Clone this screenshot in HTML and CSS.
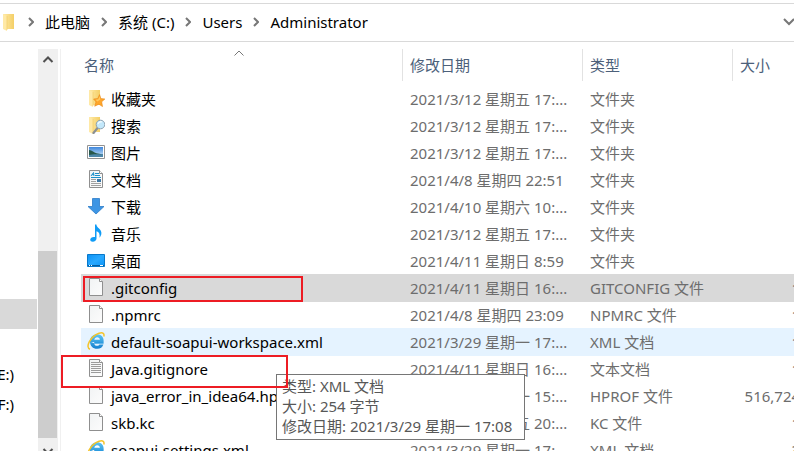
FILE: index.html
```html
<!DOCTYPE html>
<html lang="zh-CN">
<head>
<meta charset="utf-8">
<title>Administrator</title>
<link rel="stylesheet" href="styles.css">
</head>
<body>
<svg class="defs" aria-hidden="true">
  <defs>
    <linearGradient id="gold" x1="0" x2="1"><stop offset="0" stop-color="#ffeaa6"/><stop offset="1" stop-color="#f4cf67"/></linearGradient>
    <linearGradient id="sky" x1="0" y1="0" x2="0" y2="1"><stop offset="0" stop-color="#3e86dc"/><stop offset="1" stop-color="#d5ecfa"/></linearGradient>
    <linearGradient id="paper" x1="0" y1="0" x2="1" y2="1"><stop offset="0" stop-color="#f1f3f4"/><stop offset="1" stop-color="#fcfcfc"/></linearGradient>
    <linearGradient id="screen" x1="0" y1="0" x2="1" y2="1"><stop offset="0" stop-color="#0c92f5"/><stop offset=".5" stop-color="#2aa9ff"/><stop offset="1" stop-color="#0b95f8"/></linearGradient>
    <linearGradient id="ie" x1="0" y1="0" x2="0" y2="1"><stop offset="0" stop-color="#5cc5f3"/><stop offset="1" stop-color="#1580cf"/></linearGradient>
    <symbol id="folder" viewBox="0 0 18 18">
      <path d="M2 1h11v15H6z" fill="url(#gold)"/>
      <path d="M2 1l4 2v15l-4-2z" fill="#ffe9a6"/>
      <path d="M6 3v14" stroke="#f0c95f" stroke-width=".6"/>
    </symbol>
    <symbol id="star" viewBox="0 0 18 18">
      <use href="#folder" width="18" height="18"/>
      <path d="M12.6 5.6l1.3 4 4 .4-3.2 2.8.8 4.8-3.6-2.4-4.2 2 1.3-4.3L6.6 10l4.2-.4z" fill="#ffa62b" stroke="#e98a1a" stroke-width=".6"/>
      <path d="M12.5 7l.8 3.6-3 2-1.6-1.8 2.7-.5z" fill="#ffcb62"/>
    </symbol>
    <symbol id="search" viewBox="0 0 18 18">
      <use href="#folder" width="18" height="18"/>
      <path d="M10.5 12L6.5 17" stroke="#8b9094" stroke-width="2.2" stroke-linecap="round"/>
      <circle cx="13.5" cy="8.5" r="4.3" fill="#c3e8fb" stroke="#8fa2b0"/>
      <path d="M11 8a3 3 0 0 1 4-2" stroke="#f2fbff" stroke-width="1.3" fill="none"/>
    </symbol>
    <symbol id="picture" viewBox="0 0 18 18">
      <path d="M.5 2.5h17v13H.5z" fill="#fff" stroke="#929292"/>
      <path d="M2 4h14v10H2z" fill="url(#sky)"/>
      <path d="M2 7c3 0 5 3 9 3.500l5 1V12H2z" fill="#28584b"/>
      <path d="M2 12c5-1.500 9 0 14-1v3H2z" fill="#4d87a9"/>
    </symbol>
    <symbol id="blank" viewBox="0 0 18 18">
      <path d="M2.500 .5h10l3 3v14h-13z" fill="url(#paper)" stroke="#8f8f8f"/>
      <path d="M12.500 .5v3h3" fill="#fff" stroke="#8f8f8f"/>
    </symbol>
    <symbol id="text" viewBox="0 0 18 18">
      <use href="#blank" width="18" height="18"/>
      <path d="M4 3.500h8M4 5.500h10M4 7.500h10M4 9.500h10M4 11.500h10M4 13.500h10" stroke="#9b9b9b"/>
    </symbol>
    <symbol id="document" viewBox="0 0 18 18">
      <use href="#blank" width="18" height="18"/>
      <path d="M4 6l2.500-3.500L7 6M5 4.700h2M8 3.500h4M8 5.500h5M4 7.500h10" stroke="#1c8fc9" fill="none"/>
      <path d="M4 9.500h5M4 11.500h5M4 13.500h10M4 15.500h10" stroke="#a0a0a0"/>
      <path d="M10 9h4v3h-4z" fill="#3b77a6"/>
    </symbol>
    <symbol id="download" viewBox="0 0 18 18">
      <path d="M5.500 1.500h7v8h4.500L9 17 1 9.500h4.500z" fill="#3d95e4" stroke="#2c7cc9" stroke-width=".8"/>
    </symbol>
    <symbol id="music" viewBox="0 0 18 18">
      <path d="M8 .5h1.400c.3 3.600 5.100 4.500 5 8.500 0 2-.8 3.400-1.900 4.700.6-3.700-.5-5.700-3-6.400v7.200c0 2-1.700 3.200-3.700 3.200-1.600 0-2.600-.8-2.600-2 0-1.900 2.200-3.200 4.800-2.700z" fill="#109cf6"/>
    </symbol>
    <symbol id="desktop" viewBox="0 0 18 18">
      <path d="M.5 3.500h17v12H.5z" fill="url(#screen)" stroke="#0878c9"/>
      <path d="M1 14.500h16" stroke="#075e9f"/>
      <path d="M2 14.500h1M4 14.500h1M13 14.500h3" stroke="#fff"/>
    </symbol>
    <symbol id="explorer" viewBox="0 0 18 18">
      <path d="M4 10h12.600c.5-5-2.400-7.800-6.400-7.800-4.300 0-7.200 3-7.200 7.300 0 4.400 2.900 7.300 7.200 7.300 3.200 0 5.400-1.500 6.200-4.300h-3.900c-.5.900-1.200 1.300-2.300 1.300-1.800 0-2.900-.9-3-2.600zM7.300 7.700c.3-1.600 1.300-2.500 2.900-2.500s2.600.9 2.700 2.500z" fill="url(#ie)" fill-rule="evenodd"/>
      <path d="M7.200 9.900h9.400v1.800H7.200z" fill="#2b9be0"/>
      <path d="M3 17.200C-2 15.500 3 4.500 12 1.300c4-1.400 5.600.4 4.800 3.200" fill="none" stroke="#f4c42c" stroke-width="1.500"/>
    </symbol>
  </defs>
</svg>

<header class="address">
  <nav class="crumbs" aria-label="路径">
    <svg class="icon crumb-folder" aria-hidden="true"><use href="#folder"/></svg>
    <svg class="chevron" viewBox="0 0 6 10"><path d="M1 1l4 4-4 4"/></svg>
    <a href="#">此电脑</a>
    <svg class="chevron" viewBox="0 0 6 10"><path d="M1 1l4 4-4 4"/></svg>
    <a href="#">系统 (C:)</a>
    <svg class="chevron" viewBox="0 0 6 10"><path d="M1 1l4 4-4 4"/></svg>
    <a href="#">Users</a>
    <svg class="chevron" viewBox="0 0 6 10"><path d="M1 1l4 4-4 4"/></svg>
    <a href="#">Administrator</a>
  </nav>
  <button class="history" type="button" aria-label="以前的位置"><svg viewBox="0 0 12 8"><path d="M1 1l5 5 5-5"/></svg></button>
</header>

<main class="explorer">
  <nav class="tree" aria-label="导航窗格">
    <a class="drive current" href="#" aria-label="系统 (C:)"></a>
    <a class="drive" href="#" aria-label="D:"></a>
    <a class="drive" href="#">E:)</a>
    <a class="drive" href="#">F:)</a>
  </nav>
  <div class="scrollbar" aria-hidden="true">
    <svg class="arrow" viewBox="0 0 20 20"><path d="M5.500 13L10 8.500l4.500 4.500"/></svg>
    <div class="thumb"></div>
    <svg class="arrow" viewBox="0 0 20 20"><path d="M5.500 11L10 15.500l4.500-4.500"/></svg>
  </div>
  <section class="files">
    <table>
      <colgroup><col class="col-name"><col class="col-date"><col class="col-type"><col class="col-size"></colgroup>
      <thead>
        <tr>
          <th>名称<svg class="sort" viewBox="0 0 10 6"><path d="M.5 5.500L5 1l4.500 4.500"/></svg></th>
          <th>修改日期</th><th>类型</th><th>大小</th>
        </tr>
      </thead>
      <tbody>
        <tr><td><span class="name"><svg class="icon"><use href="#star"/></svg>收藏夹</span></td><td>2021/3/12 星期五 17:...</td><td>文件夹</td><td></td></tr>
        <tr><td><span class="name"><svg class="icon"><use href="#search"/></svg>搜索</span></td><td>2021/3/12 星期五 17:...</td><td>文件夹</td><td></td></tr>
        <tr><td><span class="name"><svg class="icon"><use href="#picture"/></svg>图片</span></td><td>2021/3/12 星期五 17:...</td><td>文件夹</td><td></td></tr>
        <tr><td><span class="name"><svg class="icon"><use href="#document"/></svg>文档</span></td><td>2021/4/8 星期四 22:51</td><td>文件夹</td><td></td></tr>
        <tr><td><span class="name"><svg class="icon"><use href="#download"/></svg>下载</span></td><td>2021/4/10 星期六 10:...</td><td>文件夹</td><td></td></tr>
        <tr><td><span class="name"><svg class="icon"><use href="#music"/></svg>音乐</span></td><td>2021/3/12 星期五 17:...</td><td>文件夹</td><td></td></tr>
        <tr><td><span class="name"><svg class="icon"><use href="#desktop"/></svg>桌面</span></td><td>2021/4/11 星期日 8:59</td><td>文件夹</td><td></td></tr>
        <tr class="selected"><td><span class="name"><svg class="icon"><use href="#blank"/></svg>.gitconfig</span></td><td>2021/4/11 星期日 16:...</td><td>GITCONFIG 文件</td><td>1 KB</td></tr>
        <tr><td><span class="name"><svg class="icon"><use href="#blank"/></svg>.npmrc</span></td><td>2021/4/8 星期四 23:09</td><td>NPMRC 文件</td><td>1 KB</td></tr>
        <tr class="hovered"><td><span class="name"><svg class="icon"><use href="#explorer"/></svg>default-soapui-workspace.xml</span></td><td>2021/3/29 星期一 17:...</td><td>XML 文档</td><td>1 KB</td></tr>
        <tr><td><span class="name"><svg class="icon"><use href="#text"/></svg>Java.gitignore</span></td><td>2021/4/11 星期日 16:...</td><td>文本文档</td><td>1 KB</td></tr>
        <tr><td><span class="name"><svg class="icon"><use href="#blank"/></svg>java_error_in_idea64.hprof</span></td><td>2021/3/29 星期一 15:...</td><td>HPROF 文件</td><td>516,724 KB</td></tr>
        <tr><td><span class="name"><svg class="icon"><use href="#blank"/></svg>skb.kc</span></td><td>2021/3/12 星期五 20:...</td><td>KC 文件</td><td>1 KB</td></tr>
        <tr><td><span class="name"><svg class="icon"><use href="#explorer"/></svg>soapui-settings.xml</span></td><td>2021/3/29 星期一 17:...</td><td>XML 文档</td><td>3 KB</td></tr>
      </tbody>
    </table>
  </section>
</main>

<div class="tooltip" role="tooltip">
  <div>类型: XML 文档</div>
  <div>大小: 254 字节</div>
  <div>修改日期: 2021/3/29 星期一 17:08</div>
</div>
<div class="mark mark-config"></div>
<div class="mark mark-ignore"></div>
</body>
</html>
```
FILE: styles.css
```css
* { box-sizing: border-box; }

body {
  margin: 0;
  padding-top: 3px;
  height: 100vh;
  overflow: hidden;
  display: flex;
  flex-direction: column;
  position: relative;
  background: #fff;
  color: #000;
  font: 15px/20px "Noto Sans", "Noto Sans CJK SC", sans-serif;
}

a { color: inherit; text-decoration: none; }
.defs { position: absolute; width: 0; height: 0; }
.icon { width: 18px; height: 18px; flex: none; }

.address {
  flex: none;
  height: 39px;
  padding-bottom: 2px;
  display: flex;
  align-items: center;
  justify-content: space-between;
  border-top: 1px solid #d9d9d9;
  border-bottom: 1px solid #d9d9d9;
}
.crumbs { display: flex; align-items: center; gap: 11px; white-space: nowrap; padding-left: 1px; }
.crumb-folder { margin-right: -2px; }
.chevron { width: 6px; height: 10px; fill: none; stroke: #777; stroke-width: 2; }
.history {
  width: 16px;
  height: 24px;
  margin-right: -5px;
  padding: 0;
  border: 0;
  background: none;
}
.history svg { display: block; width: 12px; height: 8px; fill: none; stroke: #777; stroke-width: 2; }

.explorer { flex: 1; min-height: 0; display: flex; }

.tree { flex: none; width: 37px; padding-top: 257px; margin-right: 1px; overflow: hidden; }
.drive {
  display: flex;
  align-items: center;
  justify-content: flex-end;
  height: 30px;
  padding-right: 23px;
}
.drive.current { background: #d9d9d9; }

.scrollbar {
  flex: none;
  width: 20px;
  margin-top: 7px;
  background: #f0f0f0;
  display: flex;
  flex-direction: column;
}
.arrow { width: 20px; height: 20px; flex: none; fill: none; stroke: #505050; stroke-width: 2; }
.thumb { width: 19px; height: 187px; margin-top: auto; background: #cdcdcd; }
.scrollbar .arrow:last-child { margin-bottom: -7px; }

.files {
  flex: 1;
  min-width: 0;
  margin: 7px 0 0 2px;
  padding-left: 20px;
  border-left: 1px solid #f0f0f0;
  overflow: hidden;
}
table { width: 750px; table-layout: fixed; border-collapse: separate; border-spacing: 0; }
.col-name { width: 321px; }
.col-date { width: 180px; }
.col-type { width: 150px; }

th {
  height: 32px;
  padding: 0 7px;
  border-left: 1px solid #e2e2e2;
  color: #4c607a;
  font-weight: 400;
  text-align: left;
}
th:first-child { position: relative; padding-left: 3px; border-left: 0; }
.sort {
  position: absolute;
  top: 1px;
  left: 153px;
  width: 10px;
  height: 6px;
  fill: none;
  stroke: #777;
}
thead::after { content: ""; display: block; height: 5px; }

td { height: 27px; padding: 0 8px 1px; color: #6d6d6d; white-space: nowrap; }
td:first-child { padding-left: 6px; padding-right: 0; color: #000; }
td:last-child { text-align: right; }
.name { display: flex; align-items: flex-start; gap: 6px; }
.selected td { background: #d9d9d9; box-shadow: 0 -1px #d9d9d9; }
.hovered td { background: #e5f3ff; box-shadow: 0 -1px #e5f3ff; }

.tooltip {
  position: absolute;
  left: 276px;
  top: 374px;
  width: 249px;
  padding: 1px 5px 3px;
  border: 1px solid #767676;
  background: #fff;
  color: #575757;
  white-space: nowrap;
}

.mark { position: absolute; border: 2px solid #ed1c24; }
.mark-config { left: 83px; top: 276px; width: 220px; height: 26px; }
.mark-ignore { left: 61px; top: 355px; width: 227px; height: 33px; }
```
